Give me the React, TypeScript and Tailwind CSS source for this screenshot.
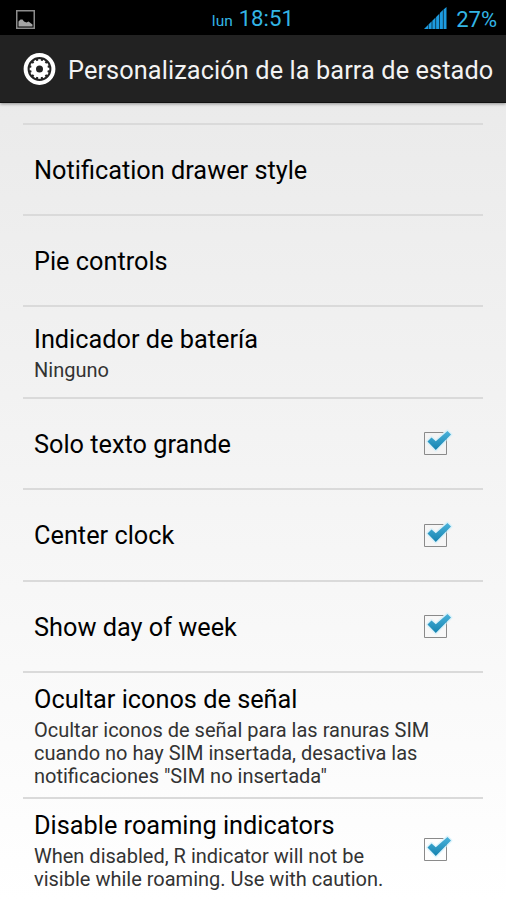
type Item = {
	title: string;
	summary?: string[];
	checked?: boolean;
	height: string;
};

const items: Item[] = [
	{ title: 'Notification drawer style', height: 'h-[91px] pt-[2px]' },
	{ title: 'Pie controls', height: 'h-[91px] pt-[2px]' },
	{
		title: 'Indicador de batería',
		summary: ['Ninguno'],
		height: 'h-[92px] pt-[2px]',
	},
	{ title: 'Solo texto grande', checked: true, height: 'h-[91px] pt-[2px]' },
	{ title: 'Center clock', checked: true, height: 'h-[92px] pt-[2px]' },
	{ title: 'Show day of week', checked: true, height: 'h-[91px] pt-[2px]' },
	{
		title: 'Ocultar iconos de señal',
		summary: [
			'Ocultar iconos de señal para las ranuras SIM',
			'cuando no hay SIM insertada, desactiva las',
			'notificaciones "SIM no insertada"',
		],
		height: 'h-[126px] pt-[2px]',
	},
	{
		title: 'Disable roaming indicators',
		summary: [
			'When disabled, R indicator will not be',
			'visible while roaming. Use with caution.',
		],
		checked: true,
		height: 'h-[102px] pt-[3px]',
	},
];

const teeth = Array.from({ length: 12 }, (_, i) => i * 30);

const GearIcon = () => (
	<svg width="34" height="34" viewBox="0 0 34 34" fill="none">
		<circle cx="17.5" cy="17" r="13.9" stroke="#fff" strokeWidth="4" />
		<circle cx="17.5" cy="17" r="6" stroke="#fff" strokeWidth="5" />
		{teeth.map((angle) => (
			<rect
				key={angle}
				x="16.2"
				y="7.2"
				width="2.6"
				height="3"
				fill="#fff"
				transform={`rotate(${angle} 17.5 17)`}
			/>
		))}
	</svg>
);

const CheckBox = () => (
	<svg width="34" height="34" viewBox="0 0 34 34" fill="none">
		<defs>
			<linearGradient id="tick" x1="0" y1="0" x2="0" y2="1">
				<stop offset="0" stopColor="#4ab2da" />
				<stop offset="1" stopColor="#1583b0" />
			</linearGradient>
		</defs>
		<path d="M23.5 14v16.5h-22v-22h19" stroke="#8a8a8a" />
		<path
			d="M4.5 17.5l4-4 4.3 3.8L24.5 7l3.5 3.5-15.2 15.5z"
			stroke="#c9eefb"
			strokeWidth="3"
			strokeLinejoin="round"
			opacity="0.6"
		/>
		<path
			d="M4.5 17.5l4-4 4.3 3.8L24.5 7l3.5 3.5-15.2 15.5z"
			fill="url(#tick)"
		/>
	</svg>
);

const StatusBar = () => (
	<div className="h-[35px] bg-black grid grid-cols-3 items-center text-[#33b5e5] whitespace-nowrap">
		<svg
			className="ml-4"
			width="19"
			height="19"
			viewBox="0 0 19 19"
			fill="none"
		>
			<rect x=".75" y=".75" width="17.5" height="17.5" stroke="#8c8c8c" strokeWidth="1.5" />
			<path
				d="M2.5 16.5v-5l2-2h2l1.5 2 2.5 1 2-1 4 3v2z"
				fill="#a6a6a6"
			/>
		</svg>
		<span className="text-[22.2px] pt-[2px] pl-[43px] leading-[33px]">
			<span className="text-[15.5px] tracking-[0.2px]">lun</span> 18:51
		</span>
		<div className="flex items-center justify-end gap-[9px] pr-[9px]">
			<svg
				className="-mt-px"
				width="23"
				height="23"
				viewBox="0 0 23 23"
				fill="#1d9be0"
			>
				<path d="M0 22l4-4v4zM4.5 22v-4.5l3.2-3.2V22zM8.3 22v-8.3l3.2-3.2V22zM12.1 22V9.9l3.2-3.2V22zM15.9 22V6.1l3-3V22zM19.5 22V2.5L22.5 0V22z" />
			</svg>
			<span className="text-[22px] leading-[33px]">27%</span>
		</div>
	</div>
);

export default function App() {
	return (
		<div
			className="w-[506px] h-[900px] overflow-hidden bg-linear-to-b from-[#e8e8e8] to-white text-black"
			style={{ fontFamily: 'Roboto, sans-serif' }}
		>
			<StatusBar />
			<header className="h-[68px] bg-[#222] border-b border-[#111] shadow-[0_1px_3px_rgba(0,0,0,0.4)] text-[#f3f3f3] flex items-center gap-[12px] pl-[22px] text-[25.3px] tracking-[0.1px] whitespace-nowrap">
				<GearIcon />
				<h1 className="pt-[5px]">Personalización de la barra de estado</h1>
			</header>
			<ul className="mx-[23px] mt-5">
				{items.map((item) => (
					<li
						className={`${item.height} border-t-2 border-[#dadada] px-[11px] flex items-center`}
						key={item.title}
					>
						<div className="flex-1 whitespace-nowrap">
							<h2 className="text-[25.3px] leading-[30px]">{item.title}</h2>
							{item.summary && (
								<div className="pt-[4px] -mb-px text-[20px] leading-[23px] text-[#333]">
									{item.summary.map((line) => (
										<p key={line}>{line}</p>
									))}
								</div>
							)}
						</div>
						{item.checked && (
							<div className="mr-[15px] -mt-[7px]">
								<CheckBox />
							</div>
						)}
					</li>
				))}
			</ul>
		</div>
	);
}
